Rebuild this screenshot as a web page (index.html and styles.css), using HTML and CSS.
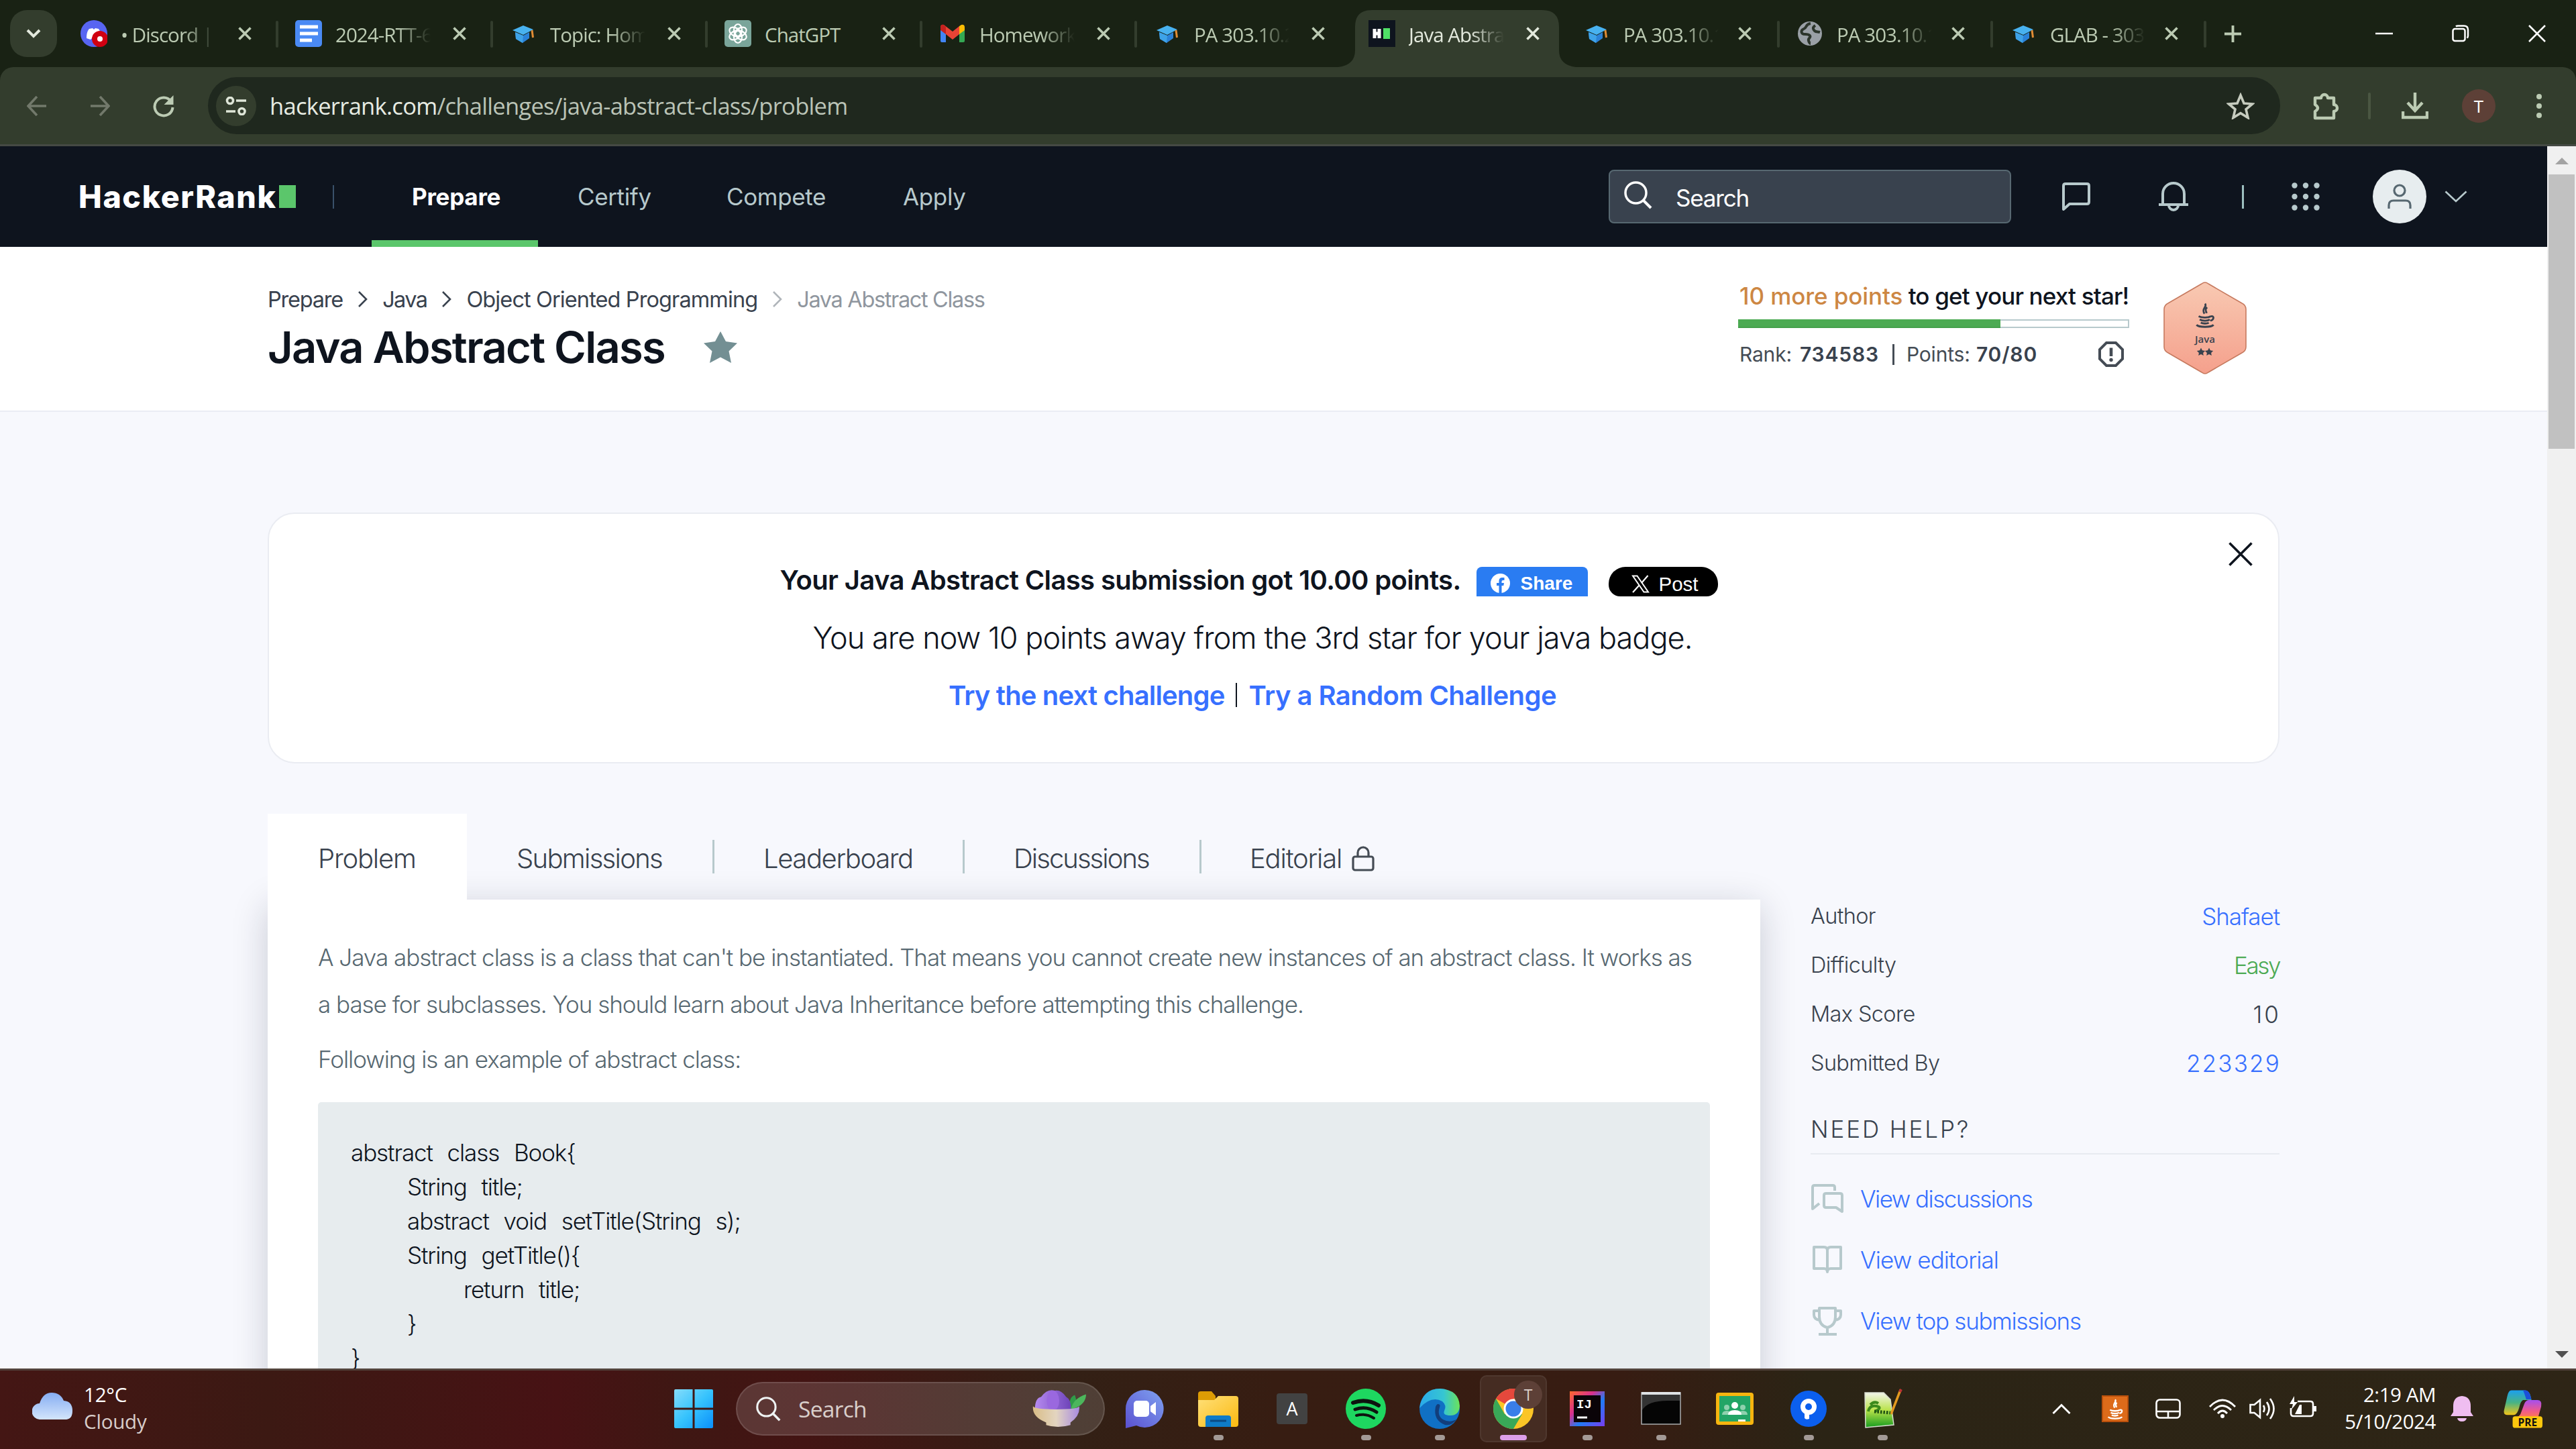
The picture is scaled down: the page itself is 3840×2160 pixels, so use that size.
FILE: index.html
```
<!DOCTYPE html>
<html lang="en">
<head>
<meta charset="utf-8">
<title>Java Abstract Class | HackerRank</title>
<link rel="stylesheet" href="styles.css">
</head>
<body>
<svg class="defs" width="0" height="0" aria-hidden="true">
  <defs>
    <linearGradient id="g-badge" x1="0" y1="0" x2="0" y2="1"><stop offset="0" stop-color="#f8c9b2"/><stop offset="1" stop-color="#f5a08c"/></linearGradient>
    <linearGradient id="g-win" x1="0" y1="0" x2="1" y2="1"><stop offset="0" stop-color="#85dcfb"/><stop offset=".5" stop-color="#36c3fd"/><stop offset="1" stop-color="#0a8ffb"/></linearGradient>
    <linearGradient id="g-cloud" x1="0" y1="0" x2="0" y2="1"><stop offset="0" stop-color="#86adf2"/><stop offset="1" stop-color="#d3e5fb"/></linearGradient>
    <linearGradient id="g-bowl" x1="0" y1="0" x2="1" y2="0"><stop offset="0" stop-color="#d9bd87"/><stop offset=".5" stop-color="#e3d5c0"/><stop offset="1" stop-color="#a88be0"/></linearGradient>
    <linearGradient id="g-petal" x1="0" y1="0" x2="1" y2="0"><stop offset="0" stop-color="#b68af0"/><stop offset="1" stop-color="#6d43b8"/></linearGradient>
    <linearGradient id="g-chat" x1="0" y1="1" x2="1" y2="0"><stop offset="0" stop-color="#5a50d0"/><stop offset="1" stop-color="#7fa2f0"/></linearGradient>
    <linearGradient id="g-folder" x1="0" y1="0" x2="1" y2="1"><stop offset="0" stop-color="#ffe07a"/><stop offset="1" stop-color="#fbb90f"/></linearGradient>
    <linearGradient id="g-edge" x1="0" y1="0" x2="1" y2="0"><stop offset="0" stop-color="#2aa9ea"/><stop offset=".6" stop-color="#36c6d2"/><stop offset="1" stop-color="#6be35a"/></linearGradient>
    <linearGradient id="g-ij" x1="0" y1="0" x2="1" y2="1"><stop offset="0" stop-color="#fd6a2b"/><stop offset=".35" stop-color="#d8308e"/><stop offset=".6" stop-color="#1f7cf5"/><stop offset="1" stop-color="#7a3cf0"/></linearGradient>
    <linearGradient id="g-grass" x1="0" y1="0" x2="0" y2="1"><stop offset="0" stop-color="#f3f5ea"/><stop offset=".5" stop-color="#b9e34a"/><stop offset="1" stop-color="#159a1e"/></linearGradient>
    <linearGradient id="g-cop1" x1="0" y1="0" x2="0" y2="1"><stop offset="0" stop-color="#1b9ff0"/><stop offset=".5" stop-color="#48b384"/><stop offset="1" stop-color="#f2c318"/></linearGradient>
    <linearGradient id="g-cop2" x1="0" y1="0" x2="0" y2="1"><stop offset="0" stop-color="#a44ff0"/><stop offset=".6" stop-color="#f05a8c"/><stop offset="1" stop-color="#ff7d4a"/></linearGradient>
    <symbol id="i-x" viewBox="0 0 20 20"><path d="M1.500 1.500l17 17M18.500 1.500l-17 17" fill="none" stroke="currentColor" stroke-width="3.600"/></symbol>
    <symbol id="i-cap" viewBox="0 0 40 40"><path d="M4 15L20 8l15 6-15 8z" fill="#48b2f0"/><path d="M8 18l12 5 9-5v9L19 34 9 28z" fill="#2b82d8"/><path d="M8 18l12 5-1 11-10-6z" fill="#3ea3e8"/><path d="M33 15l1.500 11" stroke="#e08b34" stroke-width="3"/></symbol>
    <symbol id="i-java" viewBox="0 0 40 48"><g fill="none" stroke="currentColor" stroke-width="3.600"><path d="M20 2c5 6-8 10-1 19M24 9c-5 4-2 7-1 11"/><path d="M8 26c6 3 18 3 23 0M10 32c5 3 15 3 19 0M12 38c4 2 12 2 15 0M31 26c7-2 6 7-1 8M4 42c4 5 28 5 32 0"/></g></symbol>
    <symbol id="i-search" viewBox="0 0 42 42"><circle cx="17.500" cy="17.500" r="15.500" fill="none" stroke="currentColor" stroke-width="3.500"/><path d="M28.500 28.500L40 40" stroke="currentColor" stroke-width="4"/></symbol>
  </defs>
</svg>

<header class="browser">
  <div class="tabstrip">
    <div class="tab-search"><svg width="22" height="14" viewBox="0 0 22 14"><path d="M2 2l9 9 9-9" fill="none" stroke="#e3e9dd" stroke-width="4"/></svg></div>
    <div class="tab">
      <svg class="fav" viewBox="0 0 40 40"><circle cx="20" cy="20" r="20" fill="#5865f2"/><path d="M9 27c0-8 2-12 4-14l5-1 2 2 2-2 5 1c3 4 4 9 4 14l-6 2-2-2h-6l-2 2z" fill="#fff"/><circle cx="29" cy="28" r="12" fill="#d00012"/><circle cx="29" cy="28" r="4" fill="#fff"/></svg>
      <span class="tab-title">• Discord |</span><svg class="tab-x"><use href="#i-x"/></svg></div>
    <div class="tab">
      <svg class="fav" viewBox="0 0 40 40"><rect width="40" height="40" rx="5" fill="#4a8af4"/><path d="M7 10h27M7 20h27M7 30h18" stroke="#fff" stroke-width="5"/></svg>
      <span class="tab-title">2024-RTT-6</span><svg class="tab-x"><use href="#i-x"/></svg></div>
    <div class="tab"><svg class="fav"><use href="#i-cap"/></svg><span class="tab-title">Topic: Hom</span><svg class="tab-x"><use href="#i-x"/></svg></div>
    <div class="tab">
      <svg class="fav" viewBox="0 0 40 40"><rect width="40" height="40" rx="5" fill="#7aa59a"/><g fill="none" stroke="#fff" stroke-width="2.200"><ellipse cx="20" cy="15" rx="6" ry="9"/><ellipse cx="20" cy="15" rx="6" ry="9" transform="rotate(60 20 20)"/><ellipse cx="20" cy="15" rx="6" ry="9" transform="rotate(120 20 20)"/><ellipse cx="20" cy="15" rx="6" ry="9" transform="rotate(180 20 20)"/><ellipse cx="20" cy="15" rx="6" ry="9" transform="rotate(240 20 20)"/><ellipse cx="20" cy="15" rx="6" ry="9" transform="rotate(300 20 20)"/></g></svg>
      <span class="tab-title full">ChatGPT</span><svg class="tab-x"><use href="#i-x"/></svg></div>
    <div class="tab">
      <svg class="fav" viewBox="0 0 40 40"><path d="M2 12h8v21H4q-2 0-2-2z" fill="#4285f4"/><path d="M30 12h8v19q0 2-2 2h-6z" fill="#34a853"/><path d="M30 9l3-2q5-1 5 4v4l-8 6z" fill="#fbbc04"/><path d="M2 11q0-5 5-4l13 10L30 9v12l-10 8L10 21z" fill="#ea4335"/><path d="M2 11q0-5 5-4l3 3v11l-8-6z" fill="#c5221f"/></svg>
      <span class="tab-title">Homework</span><svg class="tab-x"><use href="#i-x"/></svg></div>
    <div class="tab no-sep"><svg class="fav"><use href="#i-cap"/></svg><span class="tab-title">PA 303.10.2</span><svg class="tab-x"><use href="#i-x"/></svg></div>
    <div class="tab active no-sep">
      <svg class="fav" viewBox="0 0 40 40"><rect width="40" height="40" fill="#0e141e"/><path d="M9 13v14M16 13v14M9 20h7" stroke="#fff" stroke-width="5"/><rect x="22" y="12" width="10" height="16" fill="#4fe066"/></svg>
      <span class="tab-title">Java Abstra</span><svg class="tab-x"><use href="#i-x"/></svg></div>
    <div class="tab short"><svg class="fav"><use href="#i-cap"/></svg><span class="tab-title">PA 303.10.1</span><svg class="tab-x"><use href="#i-x"/></svg></div>
    <div class="tab short">
      <svg class="fav" viewBox="0 0 40 40"><circle cx="20" cy="20" r="18" fill="#9aa0a6"/><path d="M21 5c-8 1-5 6-10 8s-5 8 2 8 9 3 6 6 1 8 2 8M28 8c-5 3-3 6-1 8s5 1 8 2" fill="none" stroke="#2c352b" stroke-width="4"/></svg>
      <span class="tab-title">PA 303.10.1</span><svg class="tab-x"><use href="#i-x"/></svg></div>
    <div class="tab short"><svg class="fav"><use href="#i-cap"/></svg><span class="tab-title">GLAB - 303</span><svg class="tab-x"><use href="#i-x"/></svg></div>
    <svg class="tab-new" viewBox="0 0 28 28"><path d="M14 1v26M1 14h26" stroke="#bccbb3" stroke-width="4"/></svg>
    <div class="win-controls">
      <svg width="26" height="26" viewBox="0 0 26 26"><path d="M0 13h26" stroke="#fff" stroke-width="2.500"/></svg>
      <svg width="26" height="26" viewBox="0 0 26 26"><g fill="none" stroke="#fff" stroke-width="2.500"><rect x="1.500" y="6" width="18" height="18" rx="3"/><path d="M6 2.500Q7 1.500 9 1.500h9q6 0 6 6v9q0 2-1.500 3"/></g></svg>
      <svg width="26" height="26" viewBox="0 0 26 26"><path d="M1 1l24 24M25 1L1 25" stroke="#fff" stroke-width="2.500"/></svg>
    </div>
  </div>
  <div class="toolbar">
    <svg class="nav-ico dim" viewBox="0 0 30 30"><path d="M29 15H2M15 1L2 15l13 14" fill="none" stroke="currentColor" stroke-width="3.600"/></svg>
    <svg class="nav-ico dim fwd" viewBox="0 0 30 30"><path d="M1 15h27M15 1l13 14-13 14" fill="none" stroke="currentColor" stroke-width="3.600"/></svg>
    <svg class="nav-ico reload" viewBox="0 0 34 34"><path d="M28 10a13.500 13.500 0 1 0 2.500 9" fill="none" stroke="currentColor" stroke-width="4"/><path d="M31.500 1v14h-14z" fill="currentColor"/></svg>
    <div class="address">
      <div class="site-info"><svg width="32" height="28" viewBox="0 0 32 28"><g fill="none" stroke="#dfe6d8" stroke-width="3.600"><circle cx="7" cy="6" r="4.500"/><path d="M16 6h15M1 22h14"/><circle cx="24.500" cy="22" r="4.500"/></g></svg></div>
      <span class="url"><b>hackerrank.com</b>/challenges/java-abstract-class/problem</span>
      <svg class="bookmark" viewBox="0 0 42 40"><path d="M21 4l5 12 12.500 1-9.500 8 3 12.500-11-6.800L10 37.500 13 25 3.500 17 16 16z" fill="none" stroke="#c6ccbf" stroke-width="3.600"/></svg>
    </div>
    <svg class="ext" viewBox="0 0 42 42"><path d="M5 9h9a5 5 0 0 1 10 0h9v10a4.500 4.500 0 0 1 0 10v10H5V29q8-5 0-10z" fill="none" stroke="#bccbb3" stroke-width="4.400" stroke-linejoin="round"/></svg>
    <i class="tb-sep"></i>
    <svg class="dl" viewBox="0 0 40 40"><path d="M20 0v26M9 15l11 12 11-12M2 28v9h36v-9" fill="none" stroke="#bccbb3" stroke-width="4.400"/></svg>
    <span class="profile">T</span>
    <svg class="dots" viewBox="0 0 8 36"><g fill="#bccbb3"><circle cx="4" cy="4" r="4"/><circle cx="4" cy="18" r="4"/><circle cx="4" cy="32" r="4"/></g></svg>
  </div>
</header>

<div class="viewport">
  <div class="page">
    <nav class="topnav">
      <div class="logo">HackerRank<i></i></div>
      <i class="vline first"></i>
      <div class="menu">
        <a class="on">Prepare</a><a>Certify</a><a>Compete</a><a>Apply</a>
      </div>
      <div class="searchbox"><svg width="42" height="42"><use href="#i-search"/></svg><span>Search</span></div>
      <svg class="n-chat" viewBox="0 0 42 42"><path d="M2 40V5q0-3 3-3h32q3 0 3 3v24q0 3-3 3H11z" fill="none" stroke="#b7c9cc" stroke-width="4" stroke-linejoin="round"/></svg>
      <svg class="n-bell" viewBox="0 0 46 44"><path d="M7 34V18a16 16 0 0 1 32 0v16M1 34h44" fill="none" stroke="#b7c9cc" stroke-width="4"/><path d="M16 35a7 7 0 0 0 14 0" fill="none" stroke="#b7c9cc" stroke-width="4"/></svg>
      <i class="vline second"></i>
      <svg class="n-grid" viewBox="0 0 42 42"><g fill="#b7c9cc"><circle cx="4.500" cy="4.500" r="4.200"/><circle cx="21" cy="4.500" r="4.200"/><circle cx="37.500" cy="4.500" r="4.200"/><circle cx="4.500" cy="21" r="4.200"/><circle cx="21" cy="21" r="4.200"/><circle cx="37.500" cy="21" r="4.200"/><circle cx="4.500" cy="37.500" r="4.200"/><circle cx="21" cy="37.500" r="4.200"/><circle cx="37.500" cy="37.500" r="4.200"/></g></svg>
      <div class="avatar"><svg width="36" height="38" viewBox="0 0 36 38"><g fill="none" stroke="#576871" stroke-width="3.200"><circle cx="18" cy="10" r="8"/><path d="M2 37v-5q0-7 7-7h18q7 0 7 7v5"/></g></svg></div>
      <svg class="n-chev" viewBox="0 0 34 18"><path d="M1.500 1.500L17 16 32.500 1.500" fill="none" stroke="#b7c9cc" stroke-width="2.600"/></svg>
    </nav>

    <section class="challenge-head">
      <div class="head-left">
        <div class="crumbs">
          <a>Prepare</a><svg class="cr"><path d="M2 2l11 11L2 24"/></svg><a class="short-crumb">Java</a><svg class="cr"><path d="M2 2l11 11L2 24"/></svg><a>Object Oriented Programming</a><svg class="cr light"><path d="M2 2l11 11L2 24"/></svg><a class="here">Java Abstract Class</a>
        </div>
        <div class="title-row"><h1>Java Abstract Class</h1>
          <svg width="50" height="47" viewBox="0 0 50 47"><path d="M25 0l8 15 17 2.500-12.500 12L41 47l-16-8.500L9 47l3.500-17.500L0 17.500 17 15z" fill="#738f93"/></svg></div>
      </div>
      <div class="progress">
        <div class="next"><em>10 more points</em> to get your next star!</div>
        <div class="bar"><i style="width:67.3%"></i></div>
        <div class="stats"><span class="k">Rank:</span><b class="rank">734583</b><i></i><span class="k pts">Points:</span><b>70/80</b>
          <svg width="38" height="38" viewBox="0 0 38 38"><path d="M12 2h14l10 10v14L26 36H12L2 26V12z" fill="none" stroke="#454c55" stroke-width="4"/><path d="M19 9.500V22" stroke="#454c55" stroke-width="4.600"/><circle cx="19" cy="27.500" r="2.700" fill="#454c55"/></svg></div>
      </div>
      <svg class="badge" viewBox="0 0 126 138">
        <path d="M58 3q5-4 10 0l50 29q6 3 6 9v56q0 6-6 9l-50 29q-5 4-10 0L8 106q-6-3-6-9V41q0-6 6-9z" fill="url(#g-badge)" stroke="#c67a5f" stroke-width="1.600"/>
        <svg x="47" y="31" width="32" height="38" color="#39424e"><use href="#i-java"/></svg>
        <text x="63" y="91" text-anchor="middle" font-family="Open Sans, sans-serif" font-weight="600" font-size="15" fill="#39424e">Java</text>
        <g fill="#39424e"><path d="M57 98.500l1.900 3.800 4.200.6-3 3 .7 4.200-3.800-2-3.800 2 .7-4.200-3-3 4.200-.6z"/><path d="M69 98.500l1.900 3.800 4.200.6-3 3 .7 4.200-3.800-2-3.800 2 .7-4.200-3-3 4.200-.6z"/></g>
      </svg>
    </section>

    <section class="banner">
      <div class="b-row b1"><strong>Your Java Abstract Class submission got 10.00 points.</strong>
        <span class="fb"><svg width="29" height="29" viewBox="0 0 29 29"><circle cx="14.500" cy="14.500" r="14.500" fill="#fff"/><path d="M12.500 30V18H9v-4h3.500v-3q0-5 5-5h3v4h-2q-2 0-2 2v2H20l-.7 4h-2.800v12z" fill="#2a7cf2"/></svg>Share</span>
        <span class="xp"><svg width="27" height="27" viewBox="0 0 27 27"><path d="M2 1.500h6.500L25 25.500h-6.500z" fill="none" stroke="#fff" stroke-width="2"/><path d="M24.500 1L15 12M11.500 15.500L2 26" stroke="#fff" stroke-width="2.200"/></svg>Post</span>
      </div>
      <div class="b-row b2">You are now 10 points away from the 3rd star for your java badge.</div>
      <div class="b-row b3"><a>Try the next challenge</a><i></i><a class="rnd">Try a Random Challenge</a></div>
      <svg class="close" viewBox="0 0 36 36"><path d="M1.500 1.500l33 33M34.500 1.500l-33 33" stroke="#0e141e" stroke-width="3.600"/></svg>
    </section>

    <div class="columns">
      <main>
        <div class="ptabs">
          <a class="on">Problem</a><a class="w1">Submissions</a><a class="w2">Leaderboard</a><a class="w3">Discussions</a><a class="w4">Editorial<svg width="34" height="38" viewBox="0 0 34 38"><rect x="2" y="16" width="30" height="20" rx="3" fill="none" stroke="#454c55" stroke-width="3.200"/><path d="M9 16V10a8 8 0 0 1 16 0v6" fill="none" stroke="#454c55" stroke-width="3.200"/></svg></a>
        </div>
        <article class="card">
          <p>A Java abstract class is a class that can't be instantiated. That means you cannot create new instances of an abstract class. It works as<br>a base for subclasses. You should learn about Java Inheritance before attempting this challenge.</p>
          <p>Following is an example of abstract class:</p>
<pre>abstract class Book{
	String title;
	abstract void setTitle(String s);
	String getTitle(){
		return title;
	}
}</pre>
        </article>
      </main>
      <aside>
        <dl>
          <div><dt>Author</dt><dd class="link">Shafaet</dd></div>
          <div><dt>Difficulty</dt><dd class="easy">Easy</dd></div>
          <div><dt>Max Score</dt><dd class="score">10</dd></div>
          <div><dt>Submitted By</dt><dd class="link num">223329</dd></div>
        </dl>
        <h2>NEED HELP?</h2>
        <ul>
          <li class="tight"><svg viewBox="0 0 48 44"><g fill="none" stroke="#b7c9cc" stroke-width="4" stroke-linejoin="round"><path d="M35 10V5q0-3-3-3H5Q2 2 2 5v32l10-8"/><path d="M46 41V17q0-3-3-3H22q-3 0-3 3v15q0 3 3 3h15z"/></g></svg>View discussions</li>
          <li class="loose"><svg viewBox="0 0 48 44"><g fill="none" stroke="#b7c9cc" stroke-width="4" stroke-linejoin="round"><path d="M24 8q0-5-5-5H4v32h15q5 0 5 5V8q0-5 5-5h15v32H29q-5 0-5 5"/></g></svg>View editorial</li>
          <li><svg viewBox="0 0 48 44"><g fill="none" stroke="#b7c9cc" stroke-width="4" stroke-linejoin="round"><path d="M12 3h24v13q0 13-12 16-12-3-12-16zM24 32v9M11 42h27M12 7H4v6q0 7 9 8M36 7h8v6q0 7-9 8"/></g></svg>View top submissions</li>
        </ul>
      </aside>
    </div>
  </div>
  <div class="scrollbar"><b class="up"></b><i></i><b class="down"></b></div>
</div>

<footer class="taskbar">
  <div class="weather">
    <svg width="60" height="40" viewBox="0 0 60 40"><path d="M12 40A12 12 0 0 1 11 16Q16 0 29 0t18 12q13 1 13 15t-12 13z" fill="url(#g-cloud)"/></svg>
    <div><span>12°C</span><span class="soft">Cloudy</span></div>
  </div>
  <svg class="start" viewBox="0 0 58 58"><path d="M2 0h25.500v27.500H0V2q0-2 2-2zM30.500 0H56q2 0 2 2v25.500H30.500zM0 30.500h27.500V58H2q-2 0-2-2zM30.500 30.500H58V56q0 2-2 2H30.500z" fill="url(#g-win)"/></svg>
  <div class="tsearch"><svg width="37" height="37"><use href="#i-search"/></svg><span>Search</span>
    <svg class="lotus" viewBox="0 0 86 58"><path d="M59 30Q58 10 68 7q5 12-2 22z" fill="#2f9c49"/><path d="M62 29Q66 12 86 6q0 16-20 23z" fill="#4cb65c"/><path d="M4 30Q4 12 14 10q10-14 22-10 10-2 18 10 8 4 8 20z" fill="url(#g-petal)"/><ellipse cx="33" cy="16" rx="10" ry="16" fill="#9a68df"/><path d="M1 25q2 5 37 5t37-5q2 15-14 26v4q-10 3-20 3t-19-3v-4Q-1 42 1 25z" fill="url(#g-bowl)"/></svg>
  </div>
  <div class="apps">
    <div class="app"><svg viewBox="0 0 60 60"><path d="M30 2a28 28 0 1 1-12 53L2 59V30A28 28 0 0 1 30 2z" fill="url(#g-chat)"/><rect x="14" y="18" width="23" height="24" rx="5" fill="#fff"/><path d="M39 26l8-6v20l-8-6z" fill="#fff"/></svg></div>
    <div class="app run"><svg viewBox="0 0 60 60"><path d="M0 8q0-4 4-4h16l6 7v9H0z" fill="#dd9c04"/><path d="M0 17h24l6-6h26q4 0 4 4v38q0 4-4 4H4q-4 0-4-4z" fill="url(#g-folder)"/><path d="M11 57V44q0-4 4-4h30q4 0 4 4v13z" fill="#0e7bc8"/><path d="M18 48h24" stroke="#0b4b85" stroke-width="3"/></svg></div>
    <div class="app"><svg viewBox="0 0 60 60"><rect x="7" y="7" width="46" height="46" rx="4" fill="#424242"/><text x="30" y="40" text-anchor="middle" font-family="Open Sans, sans-serif" font-size="27" fill="#fff">A</text></svg></div>
    <div class="app run"><svg viewBox="0 0 60 60"><circle cx="30" cy="30" r="30" fill="#1ed760"/><g fill="none" stroke="#0d130f" stroke-linecap="round"><path d="M11 21q20-7 38 4" stroke-width="6"/><path d="M14 31q17-6 32 4" stroke-width="5"/><path d="M16 40q14-4 26 4" stroke-width="4"/></g></svg></div>
    <div class="app run"><svg viewBox="0 0 60 60"><circle cx="30" cy="30" r="30" fill="#1070c4"/><path d="M0 29Q4 0 31 0q28 2 29 26-1 14-14 14-12 0-9-7 4-8-3-14Q18 10 0 29z" fill="url(#g-edge)"/><path d="M24 27q-4 20 14 27 10 2 18-9-10 7-21 1-9-6-5-18 2-5-3-5-2 1-3 4z" fill="#123e7c"/></svg></div>
    <div class="app current"><svg viewBox="0 0 60 60"><circle cx="30" cy="30" r="30" fill="#fbc116"/><path d="M30 30L4 15A30 30 0 0 1 56 15H30z" fill="#e33b2e"/><path d="M4 15a30 30 0 0 0 26 45l13-22-26 0z" fill="#2ba24c"/><circle cx="30" cy="30" r="14.500" fill="#fff"/><circle cx="30" cy="30" r="11.500" fill="#2a75e8"/></svg><span class="who">T</span></div>
    <div class="app run"><svg viewBox="0 0 60 60"><rect x="4" y="4" width="52" height="52" fill="url(#g-ij)"/><rect x="10" y="10" width="40" height="40" fill="#0a0408"/><text x="14" y="29" font-family="Liberation Mono, monospace" font-weight="700" font-size="19" fill="#fff">IJ</text><path d="M15 43h15" stroke="#fff" stroke-width="3"/></svg></div>
    <div class="app run"><svg viewBox="0 0 60 60"><rect x="1" y="6" width="58" height="47" fill="#050505" stroke="#a9acae" stroke-width="1.500"/><rect x="1" y="5" width="58" height="4" fill="#dfe3e6"/><path d="M2 32Q10 18 40 18h18V9H2z" fill="#333"/></svg></div>
    <div class="app"><svg viewBox="0 0 60 60"><rect x="2" y="6" width="56" height="48" rx="4" fill="#f6b50f"/><rect x="7" y="11" width="46" height="38" fill="#23a566"/><g fill="#8fd1ae"><circle cx="18" cy="28" r="4"/><circle cx="42" cy="28" r="4"/><path d="M11 39q0-6 7-6t7 6zM35 39q0-6 7-6t7 6z"/></g><g fill="#fff"><circle cx="30" cy="25" r="5"/><path d="M20 39q0-7 10-7t10 7zM35 46h11v3H35z"/></g></svg></div>
    <div class="app run"><svg viewBox="0 0 60 60"><circle cx="30" cy="30" r="27" fill="#0b5fee"/><circle cx="30" cy="27" r="8.500" fill="none" stroke="#fff" stroke-width="7"/><path d="M24 32h7v13q-5 2-7-1z" fill="#fff"/></svg></div>
    <div class="app run"><svg viewBox="0 0 60 60"><path d="M4 6h28l10 10 5 38-42 4z" fill="url(#g-grass)" stroke="#d8dcd0" stroke-width="1.500"/><path d="M57 2L43 38" stroke="#e39a20" stroke-width="3.500"/><path d="M58 1l-2 4" stroke="#b33" stroke-width="4"/><path d="M9 34q2-10 12-8t-2 8M12 24q6-6 12-2" fill="none" stroke="#3b8a1b" stroke-width="4"/><path d="M18 34l24 2" stroke="#1d4f12" stroke-width="5" stroke-dasharray="2.500 2"/></svg></div>
  </div>
  <div class="tray">
    <svg class="t-chev" viewBox="0 0 28 17"><path d="M1.500 15L14 2.500 26.500 15" fill="none" stroke="#fff" stroke-width="3"/></svg>
    <div class="t-java"><svg width="26" height="31" color="#fff"><use href="#i-java"/></svg></div>
    <svg class="t-pad" viewBox="0 0 38 30"><g fill="none" stroke="#fff" stroke-width="2.600"><rect x="1.500" y="1.500" width="35" height="27" rx="5"/><path d="M2 19h34M19 19v9"/></g></svg>
    <svg class="t-wifi" viewBox="0 0 40 30"><g fill="none" stroke="#fff" stroke-width="2.800"><path d="M1 12Q20-8 39 12M7 17q13-13 26 0M13 22q7-8 14 0"/></g><circle cx="20" cy="26" r="3" fill="#fff"/></svg>
    <svg class="t-vol" viewBox="0 0 40 34"><g fill="none" stroke="#fff" stroke-width="2.600"><path d="M1.500 11h6L16 4v26l-8.500-7h-6zM21 12q3 5 0 10M26 7q7 10 0 20M31 2q11 15 0 30"/></g></svg>
    <svg class="t-bat" viewBox="0 0 40 32"><path d="M12 8h19q4 0 4 4v14q0 4-4 4H6q-4 0-4-4V18" fill="none" stroke="#fff" stroke-width="2.600"/><path d="M36 15h4v8h-4zM8 27l7-14h3v14zM7 0L0 12h5l-2 8 9-11H7z" fill="#fff"/></svg>
    <div class="clock"><span>2:19 AM</span><span>5/10/2024</span></div>
    <svg class="t-bell" viewBox="0 0 34 38"><path d="M17 0Q30 1 30 15v9l4 6H0l4-6v-9Q4 1 17 0zM10 33h14q-1 5-7 5t-7-5z" fill="#efbdf0"/></svg>
    <svg class="t-cop" viewBox="0 0 60 58"><path d="M12 0h20q8 0 10 10l1 5H30q-4 2-6 12-3 11-8 11H6q-7 0-5-8L6 8q2-8 6-8z" fill="url(#g-cop1)"/><path d="M30 0h4q6 0 9 14h-8q-3-10-5-14z" fill="#1c4fd8"/><path d="M40 15h12q8 0 6 10l-5 18H12q10 0 14-6l6-16q2-6 8-6z" fill="url(#g-cop2)"/><rect x="14" y="40" width="46" height="18" rx="4" fill="#fdc80d"/><text x="37" y="55" text-anchor="middle" font-family="Open Sans, sans-serif" font-weight="700" font-size="16" fill="#111">PRE</text></svg>
  </div>
</footer>
</body>
</html>
```
FILE: styles.css
```
* { box-sizing: border-box; }
html, body { margin: 0; }
body { width: 3840px; height: 2160px; overflow: hidden; display: flex; flex-direction: column; font-family: Inter, sans-serif; background: #f7f8fd; }
svg { flex: none; display: block; }
h1, h2, p, pre, dl, dd, ul { margin: 0; padding: 0; }
.defs { position: absolute; }

/* Browser chrome */
.browser { height: 218px; background: #192214; font-family: "Open Sans", sans-serif; flex: none; }
.tabstrip { height: 100px; display: flex; align-items: center; }
.tab-search { width: 70px; height: 70px; margin: 0 8px 0 15px; border-radius: 25px; background: #333d2d; display: flex; align-items: center; justify-content: center; }
.tab { width: 320px; height: 100px; padding-left: 27px; display: flex; align-items: center; position: relative; color: #bccbb3; }
.tab.short { width: 318px; }
.tab.short .tab-title { margin-right: 29px; }
.tab::after { content: ""; position: absolute; right: -2px; top: 31px; width: 4px; height: 40px; border-radius: 2px; background: #333d2d; }
.tab.no-sep::after { display: none; }
.fav { width: 40px; height: 40px; }
.tab-title { width: 142px; margin: 3px 33px 0 20px; white-space: nowrap; font-size: 29.5px; letter-spacing: -.95px; -webkit-mask-image: linear-gradient(90deg, #000 65%, transparent); mask-image: linear-gradient(90deg, #000 65%, transparent); }
.tab-title.full { -webkit-mask-image: none; mask-image: none; }
.tab-x { width: 20px; height: 20px; }
.tab.active { color: #e3e9dd; }
.tab.active > * { z-index: 1; }
.tab.active::before { content: ""; position: absolute; z-index: 0; left: -18px; top: 15px; width: 354px; height: 85px; background: #333d2d; clip-path: path("M0 85Q25 82 25 60V25Q25 0 50 0H304Q329 0 329 25V60Q329 82 354 85Z"); }
.tab-new { width: 27px; height: 27px; margin-left: 28px; }
.win-controls { margin-left: auto; margin-right: 45px; display: flex; gap: 88px; }
.toolbar { height: 118px; background: #333d2d; border-bottom: 3px solid #454a44; border-radius: 20px 20px 0 0; display: flex; align-items: center; }
.nav-ico { width: 30px; height: 30px; margin-left: 40px; color: #bccbb3; }
.nav-ico.dim { color: #72796b; }
.nav-ico.fwd { margin-left: 64px; }
.nav-ico.reload { width: 34px; height: 34px; margin-left: 63px; }
.address { width: 3089px; height: 85px; margin-left: 49px; border-radius: 43px; background: #1f281e; display: flex; align-items: center; padding: 0 37px 0 12px; }
.site-info { width: 60px; height: 60px; border-radius: 50%; background: #333d2d; display: flex; align-items: center; justify-content: center; }
.url { margin-left: 20px; flex: 1; font-size: 34.5px; letter-spacing: -.7px; color: #bac3b6; white-space: nowrap; }
.url b { font-weight: 400; color: #e6ebe2; }
.bookmark { width: 42px; height: 40px; margin-right: 1px; }
.ext { width: 42px; height: 42px; margin-left: 47px; }
.tb-sep { width: 4px; height: 40px; border-radius: 2px; background: #4a5642; margin-left: 42px; }
.dl { width: 40px; height: 40px; margin-left: 46px; }
.profile { width: 50px; height: 50px; border-radius: 50%; background: #5d4037; color: #fff; font-size: 26px; line-height: 50px; text-align: center; margin-left: 50px; }
.dots { width: 8px; height: 36px; margin-left: 61px; }

/* Page shell */
.viewport { height: 1822px; flex: none; display: flex; overflow: hidden; }
.page { width: 3797px; background: #f7f8fd; }
.scrollbar { width: 43px; background: #f0f0f0; display: flex; flex-direction: column; align-items: center; }
.scrollbar i { width: 39px; height: 409px; background: #c1c1c1; margin-top: 15px; }
.scrollbar b { width: 0; height: 0; border: 10px solid transparent; }
.scrollbar .up { margin-top: 7px; border-bottom-color: #a3a3a3; }
.scrollbar .down { margin-top: auto; margin-bottom: 6px; border-top-color: #505050; }

/* Top navigation */
.topnav { height: 150px; background: #0e141e; display: flex; align-items: center; padding-left: 117px; color: #b7c9cc; }
.logo { width: 324px; display: flex; align-items: center; justify-content: space-between; font-size: 46.5px; font-weight: 800; letter-spacing: 1.6px; color: #fff; white-space: nowrap; }
.logo i { width: 25px; height: 34px; background: #5bc66b; }
.vline { width: 2px; height: 35px; background: #39516a; }
.vline.first { margin-left: 55px; }
.vline.second { margin-left: 79px; width: 3px; background: #9dc0c0; }
.menu { align-self: stretch; display: flex; margin-left: 56px; }
.menu a { width: 224px; display: flex; align-items: center; font-size: 35px; letter-spacing: -.36px; }
.menu a.on { width: 248px; padding-left: 60px; color: #fff; font-weight: 700; letter-spacing: -.25px; border-bottom: 10px solid #5bc66b; padding-top: 10px; margin-right: 59px; }
.menu a:nth-child(2) { width: 222px; }
.menu a:nth-child(3) { width: 263px; }
.menu a:nth-child(4) { width: 200px; }
.searchbox { width: 600px; height: 80px; margin-left: auto; border: 2px solid #576871; border-radius: 8px; background: #39424e; color: #fff; display: flex; align-items: center; gap: 35px; padding-left: 21px; font-size: 35px; letter-spacing: -1.2px; }
.searchbox svg { margin-top: -4px; }
.searchbox span { padding-top: 3px; }
.n-chat { width: 42px; height: 42px; margin-left: 76px; }
.n-bell { width: 46px; height: 44px; margin-left: 101px; }
.n-grid { width: 42px; height: 42px; margin-left: 71px; }
.avatar { width: 80px; height: 80px; border-radius: 50%; background: #e7edef; margin-left: 79px; display: flex; align-items: center; justify-content: center; }
.n-chev { width: 34px; height: 18px; margin: 0 119px 0 27px; }

/* Challenge header */
.challenge-head { height: 246px; background: #fff; border-bottom: 2px solid #eaecf4; display: flex; padding: 48px 0 0 399px; }
.head-left { width: 2192px; }
.crumbs { height: 60px; display: flex; align-items: center; font-size: 32.5px; letter-spacing: -.9px; color: #39424e; white-space: nowrap; }
.crumbs a:first-child { letter-spacing: -1.2px; }
.crumbs .short-crumb { letter-spacing: -1.6px; }
.crumbs .here { color: #8f969e; letter-spacing: -1.35px; }
.cr { width: 15px; height: 26px; margin: 0 22px; fill: none; stroke: #39424e; stroke-width: 2.6; }
.cr.light { stroke: #b0b5ba; }
.title-row { height: 82px; display: flex; align-items: center; gap: 58px; }
h1 { font-size: 65px; font-weight: 600; letter-spacing: -1.74px; color: #0e141e; white-space: nowrap; }
.progress { width: 583px; }
.next { height: 50px; line-height: 50px; font-size: 35px; font-weight: 500; letter-spacing: -.84px; color: #0e141e; white-space: nowrap; padding-left: 2px; }
.next em { font-style: normal; color: #cd8743; letter-spacing: -.1px; }
.bar { height: 13px; margin: 10px 0 14px; border: 2px solid #b7c9cc; border-left: 0; }
.bar i { display: block; height: 13px; margin-top: -2px; background: #4caa53; border-bottom: 2px solid #45a04c; }
.stats { height: 50px; display: flex; align-items: center; font-size: 30px; color: #454c55; padding-left: 2px; }
.stats .k { width: 90px; letter-spacing: -.2px; }
.stats .k.pts { width: 104px; margin-left: 18px; }
.stats b { font-weight: 600; color: #39424e; letter-spacing: .8px; }
.stats .rank { width: 138px; }
.stats i { width: 3px; height: 31px; background: #454c55; }
.stats b + svg { margin-left: auto; margin-right: 8px; }
.badge { width: 126px; height: 138px; margin: 4px 0 0 50px; }

/* Submission banner */
.banner { width: 2999px; height: 374px; margin: 150px 0 75px 399px; padding: 55px 63px 0 0; background: #fff; border: 2px solid #eaecf2; border-radius: 40px; position: relative; color: #0e141e; white-space: nowrap; }
.b-row { height: 86px; display: flex; align-items: center; justify-content: center; }
.b1 { padding-right: 11px; }
.b1 strong { width: 1013px; font-size: 40px; font-weight: 600; letter-spacing: -.63px; }
.fb, .xp { height: 44px; margin-top: 6px; display: flex; align-items: center; color: #fff; font-family: "Liberation Sans", sans-serif; font-size: 28px; }
.fb { width: 166px; margin-left: 25px; padding: 5px 0 0 21px; gap: 16px; background: #2a7cf2; border-radius: 8px 8px 0 0; font-weight: 700; }
.xp { width: 163px; margin-left: 31px; padding: 7px 0 0 34px; gap: 14px; background: #000; border-radius: 25px 25px 17px 17px; font-size: 29.5px; }
.b2 { font-size: 45px; font-weight: 300; letter-spacing: -.95px; }
.b3 { font-size: 40px; font-weight: 600; letter-spacing: -.84px; color: #3770ff; }
.b3 .rnd { letter-spacing: -.55px; }
.b3 i { width: 2px; height: 36px; margin: 0 17px; background: #0e141e; }
.close { position: absolute; right: 38px; top: 42px; width: 36px; height: 36px; }

/* Problem columns */
.columns { display: flex; padding-left: 399px; }
main { width: 2225px; }
.ptabs { height: 128px; display: flex; }
.ptabs a { position: relative; padding: 5px 0 0 74px; display: flex; align-items: center; font-size: 40px; font-weight: 300; letter-spacing: -1.2px; color: #39424e; white-space: nowrap; }
.ptabs .on { width: 297px; padding-left: 75px; background: #fff; z-index: 1; }
.ptabs .w1 { width: 368px; letter-spacing: -1.7px; }
.ptabs .w2 { width: 373px; letter-spacing: -1.4px; }
.ptabs .w3 { width: 353px; letter-spacing: -1.95px; }
.ptabs .w4 svg { margin-left: 15px; }
.ptabs .w4 { padding-left: 73px; }
.ptabs .w1::after, .ptabs .w2::after, .ptabs .w3::after { content: ""; position: absolute; right: -1px; top: 39px; width: 3px; height: 50px; background: #b7c9cc; }
.card { height: 900px; background: #fff; padding: 51px 75px 0; box-shadow: 0 10px 50px rgba(20, 24, 50, .2); font-weight: 300; font-size: 35px; }
.card p { line-height: 70px; letter-spacing: -1.03px; color: #576871; white-space: nowrap; margin-bottom: 12px; font-weight: 350; }
.card p + p { margin-bottom: 29px; letter-spacing: -1.04px; }
pre { height: 600px; background: #e7ecee; border-radius: 5px; padding: 50px 49px; font: 300 35px/51px Inter, sans-serif; letter-spacing: -1.1px; word-spacing: 13px; tab-size: 84px; color: #0e141e; }
aside { width: 699px; margin-left: 75px; padding-top: 116px; }
dl div { height: 73px; display: flex; justify-content: space-between; align-items: center; }
dt { font-size: 32.5px; font-weight: 300; letter-spacing: -.65px; color: #39424e; }
dd { font-size: 35px; font-weight: 300; letter-spacing: -1.1px; color: #39424e; }
dd.link { color: #3770ff; }
dd.num { letter-spacing: 2.2px; margin-right: -2px; }
dd.easy { color: #4caa53; letter-spacing: -2.4px; }
dd.score { letter-spacing: 3px; margin-right: -2px; }
h2 { margin-top: 27px; line-height: 71px; font-size: 35px; font-weight: 300; letter-spacing: 2.9px; color: #39424e; border-bottom: 2px solid #e7eaf0; }
ul { list-style: none; margin-top: 20px; }
li { height: 91px; display: flex; align-items: center; font-size: 35px; font-weight: 300; letter-spacing: -1.25px; color: #3770ff; }
li.tight { letter-spacing: -1.55px; }
li.loose { letter-spacing: -.9px; }
li svg { width: 48px; height: 44px; margin: 0 25px 0 1px; }

/* Taskbar */
.taskbar { height: 120px; flex: none; display: flex; align-items: center; border-top: 3px solid #52433c; padding-bottom: 3px; font-family: "Open Sans", sans-serif; color: #fff;
  background: linear-gradient(90deg, #441614 0, #3c1913 400px, #471214 830px, #3f1713 1010px, #431413 1200px, #332015 1600px, #371d12 1900px, #371c12 2420px, #2b2415 2700px, #2e2516 3840px); }
.weather { width: 957px; margin-left: 48px; display: flex; align-items: center; gap: 17px; font-size: 29.5px; line-height: 40px; letter-spacing: -.2px; }
.weather svg { margin-top: -9px; }
.weather div, .clock { margin-top: -2px; }
.weather span, .clock span { display: block; }
.weather .soft { color: #d8cdca; }
.start { width: 58px; height: 58px; }
.tsearch { width: 550px; height: 80px; margin-left: 34px; border-radius: 40px; background: rgba(255, 255, 255, .14); border: 2px solid rgba(255, 255, 255, .12); display: flex; align-items: center; padding-left: 28px; font-size: 33.5px; letter-spacing: -.7px; color: #d9cfcb; }
.tsearch span { margin-left: 26px; }
.tsearch > svg:first-child { color: #eef2f2; }
.tsearch .lotus { width: 80px; height: 56px; margin-left: auto; margin-right: 26px; }
.apps { display: flex; margin-left: 4px; }
.app { width: 110px; height: 100px; display: flex; align-items: center; justify-content: center; position: relative; }
.app svg { width: 60px; height: 60px; }
.app.run::after, .app.current::after { content: ""; position: absolute; bottom: 3px; left: 48px; width: 15px; height: 8px; border-radius: 4px; background: #a39a96; }
.app.current::after { left: 35px; width: 40px; background: #dc9ee8; z-index: 1; }
.app.current::before { content: ""; position: absolute; inset: 0 5px; border-radius: 10px; background: rgba(255, 255, 255, .07); border: 2px solid rgba(255, 255, 255, .06); }
.who { position: absolute; left: 56px; top: 8px; width: 42px; height: 42px; border-radius: 50%; background: #5d4037; color: #ded2cd; font-size: 23px; line-height: 42px; text-align: center; }
.tray { margin-left: auto; padding-right: 50px; display: flex; align-items: center; }
.t-chev { width: 28px; height: 17px; }
.t-java { width: 40px; height: 40px; margin-left: 46px; background: #dd6b1a; border: 2px solid #b9500c; display: flex; align-items: center; justify-content: center; }
.t-pad { width: 38px; height: 30px; margin-left: 40px; }
.t-wifi { width: 40px; height: 30px; margin-left: 42px; }
.t-vol { width: 40px; height: 34px; margin-left: 20px; }
.t-bat { width: 40px; height: 32px; margin-left: 20px; margin-top: -6px; }
.clock { width: 150px; margin-left: 28px; text-align: right; font-size: 29.5px; line-height: 40px; letter-spacing: -.45px; white-space: nowrap; }
.t-bell { width: 34px; height: 38px; margin-left: 22px; }
.t-cop { width: 58px; height: 57px; margin-left: 45px; }
```
